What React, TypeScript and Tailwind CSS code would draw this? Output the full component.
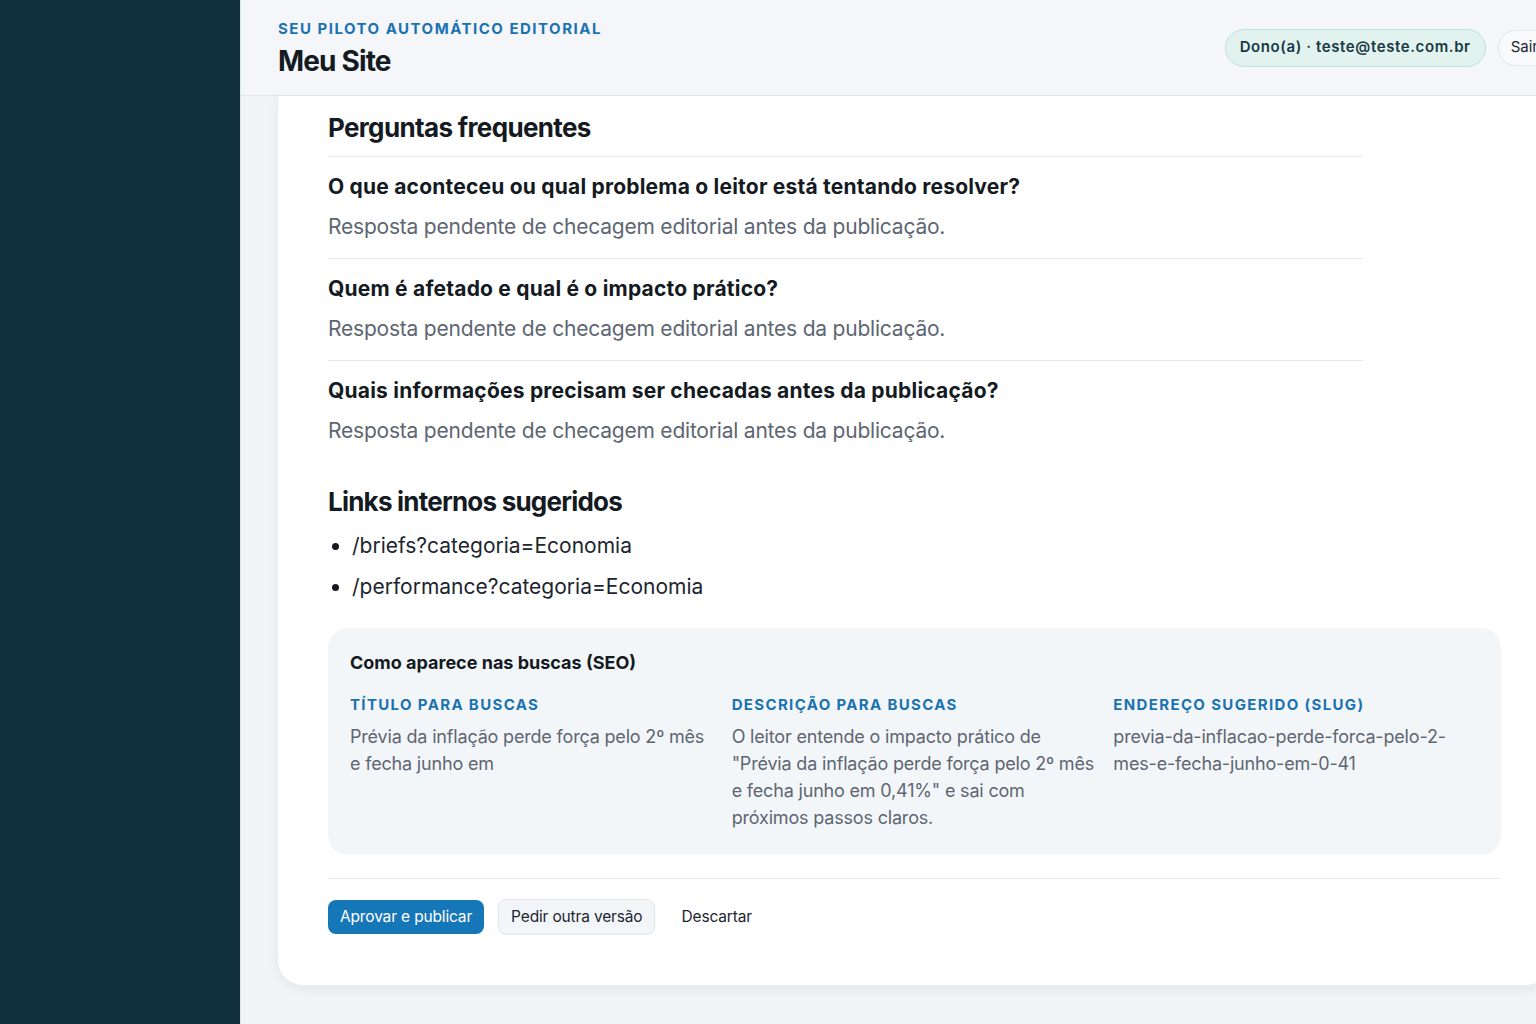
const faqs = [
  "O que aconteceu ou qual problema o leitor está tentando resolver?",
  "Quem é afetado e qual é o impacto prático?",
  "Quais informações precisam ser checadas antes da publicação?"
];

const links = ["/briefs?categoria=Economia", "/performance?categoria=Economia"];

const seo = [
  { label: "Título para buscas", value: "Prévia da inflação perde força pelo 2º mês e fecha junho em" },
  {
    label: "Descrição para buscas",
    value: "O leitor entende o impacto prático de \"Prévia da inflação perde força pelo 2º mês e fecha junho em 0,41%\" e sai com próximos passos claros."
  },
  { label: "Endereço sugerido (slug)", value: "previa-da-inflacao-perde-forca-pelo-2-mes-e-fecha-junho-em-0-41" }
];

function Header() {
  return (
    <header className="h-[96px] shrink-0 flex items-center justify-between px-[37px] bg-[#f4f6fa] border-b border-[#e3e7ed]">
      <div className="pt-[2px]">
        <div className="text-[15px] leading-5 font-bold tracking-[0.1em] uppercase text-[#1a73b0]">
          Seu piloto automático editorial
        </div>
        <div className="mt-[5px] text-[28px] leading-[34px] font-bold tracking-[-0.03em] text-[#141a22]">Meu Site</div>
      </div>
      <div className="flex items-center gap-3">
        <span className="h-[38px] flex items-center px-[14px] rounded-full bg-[#e2f3ef] border border-[#bfe2da] text-[15px] font-semibold tracking-[0.04em] text-[#173944]">
          Dono(a) · teste@teste.com.br
        </span>
        <button className="h-[36px] px-3 rounded-full bg-[#f8fafc] border border-[#e1e5ea] text-[15px] text-[#1d2530]">
          Sair
        </button>
      </div>
    </header>
  );
}

function Faq() {
  return (
    <section className="max-w-[1035px]">
      <h2 className="text-[26px] leading-8 font-bold tracking-tight text-[#141a22] pb-3 border-b border-[#e6e9ee]">
        Perguntas frequentes
      </h2>
      {faqs.map((q, i) => (
        <div key={q} className={i < faqs.length - 1 ? "pt-4 pb-4 border-b border-[#e6e9ee]" : "pt-4"}>
          <h3 className="text-[21px] leading-7 font-bold tracking-[0.01em] text-[#141a22]">{q}</h3>
          <p className="mt-[11px] text-[21px] leading-[30px] text-[#5d6672] tracking-[-0.01em]">
            Resposta pendente de checagem editorial antes da publicação.
          </p>
        </div>
      ))}
    </section>
  );
}

function Links() {
  return (
    <section className="mt-[40px]">
      <h2 className="text-[26px] leading-8 font-bold tracking-[-0.03em] text-[#141a22]">Links internos sugeridos</h2>
      <ul className="mt-[14px] flex flex-col gap-[13px] list-disc pl-[24px] marker:text-[#141a22]">
        {links.map((l) => (
          <li key={l} className="text-[21px] leading-7 text-[#1d2530]">
            {l}
          </li>
        ))}
      </ul>
    </section>
  );
}

function Seo() {
  return (
    <section className="mt-[27px] rounded-[20px] bg-[#f3f6f9] px-[22px] pt-[23px] pb-[24px]">
      <h3 className="text-[18px] leading-6 font-bold text-[#141a22]">Como aparece nas buscas (SEO)</h3>
      <div className="mt-5 grid grid-cols-3 gap-x-[16px]">
        {seo.map((s) => (
          <div key={s.label}>
            <div className="text-[15px] leading-5 font-bold uppercase tracking-[0.09em] text-[#1a73b0]">{s.label}</div>
            <p className="mt-[8px] text-[18px] leading-[27px] text-[#5d6672] tracking-[-0.01em] break-words">{s.value}</p>
          </div>
        ))}
      </div>
    </section>
  );
}

export default function App() {
  return (
    <div
      className="w-screen h-[1024px] overflow-hidden flex bg-[#f1f5f8]"
      style={{ fontFamily: "Inter, 'Noto Sans', sans-serif" }}
    >
      <aside className="w-[240px] shrink-0 bg-[#12313f]" />
      <main className="w-[1348px] shrink-0 flex flex-col border-l border-[#dbe6ef]">
        <Header />
        <div className="px-[36px]">
          <div className="bg-white rounded-b-[26px] shadow-[0_4px_12px_rgba(15,23,42,0.06)] border border-t-0 border-[#e8ecf1] px-[50px] pt-[16px] pb-[50px]">
            <Faq />
            <Links />
            <Seo />
            <div className="mt-[23px] pt-[20px] border-t border-[#e6e9ee] flex items-center gap-[14px]">
              <button className="h-[34px] px-3 rounded-lg bg-[#1677b8] text-white text-[15.5px] tracking-[-0.01em]">
                Aprovar e publicar
              </button>
              <button className="h-[36px] px-3 rounded-lg bg-[#f3f6f9] border border-[#e1e6ec] text-[15.5px] text-[#1d2530] tracking-[-0.01em]">
                Pedir outra versão
              </button>
              <button className="h-[34px] px-3 text-[15.5px] text-[#1d2530] tracking-[-0.01em]">Descartar</button>
            </div>
          </div>
        </div>
      </main>
    </div>
  );
}
